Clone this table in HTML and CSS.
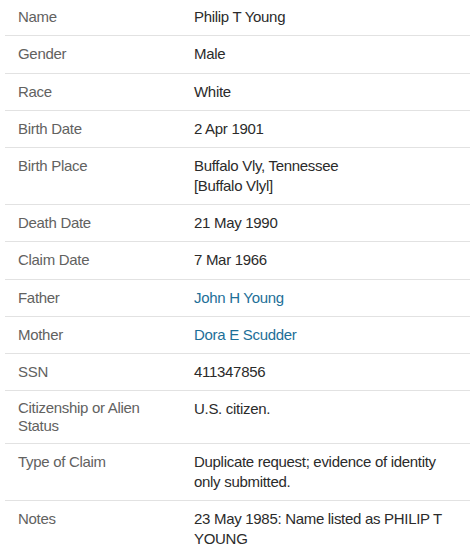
FILE: index.html
```html
<!DOCTYPE html>
<html lang="en">
<head>
<meta charset="utf-8">
<title>Record</title>
<link rel="stylesheet" href="styles.css">
</head>
<body>
<div class="record">
  <div class="row"><div class="label">Name</div><div class="value">Philip T Young</div></div>
  <div class="row"><div class="label">Gender</div><div class="value">Male</div></div>
  <div class="row"><div class="label">Race</div><div class="value">White</div></div>
  <div class="row"><div class="label">Birth Date</div><div class="value">2 Apr 1901</div></div>
  <div class="row"><div class="label">Birth Place</div><div class="value">Buffalo Vly, Tennessee<br>[Buffalo Vlyl]</div></div>
  <div class="row"><div class="label">Death Date</div><div class="value">21 May 1990</div></div>
  <div class="row"><div class="label">Claim Date</div><div class="value">7 Mar 1966</div></div>
  <div class="row"><div class="label">Father</div><div class="value"><a class="link" href="#">John H Young</a></div></div>
  <div class="row"><div class="label">Mother</div><div class="value"><a class="link" href="#">Dora E Scudder</a></div></div>
  <div class="row"><div class="label">SSN</div><div class="value">411347856</div></div>
  <div class="row"><div class="label tight">Citizenship or Alien Status</div><div class="value">U.S. citizen.</div></div>
  <div class="row"><div class="label">Type of Claim</div><div class="value">Duplicate request; evidence of identity only submitted.</div></div>
  <div class="row last"><div class="label">Notes</div><div class="value">23 May 1985: Name listed as PHILIP T YOUNG</div></div>
</div>
</body>
</html>
```
FILE: styles.css
```css
html, body {
  margin: 0;
  padding: 0;
  background: #ffffff;
}
body {
  font-family: "Liberation Sans", Arial, sans-serif;
  font-size: 15px;
  line-height: 19.5px;
  letter-spacing: -0.3px;
}
.record {
  width: 465px;
  margin-left: 5px;
  margin-top: -1px;
}
.row {
  display: grid;
  grid-template-columns: 189px 1fr;
  padding: 8px 0 8.8px;
  border-bottom: 1px solid #e2e2e2;
}
.row.last {
  border-bottom: none;
}
.label {
  padding-left: 13px;
  padding-right: 22px;
  color: #62625f;
}
.label.tight {
  line-height: 17.5px;
}
.value {
  color: #2b2b2b;
  padding-right: 12px;
}
.link {
  color: #1d6f98;
  text-decoration: none;
}
```
